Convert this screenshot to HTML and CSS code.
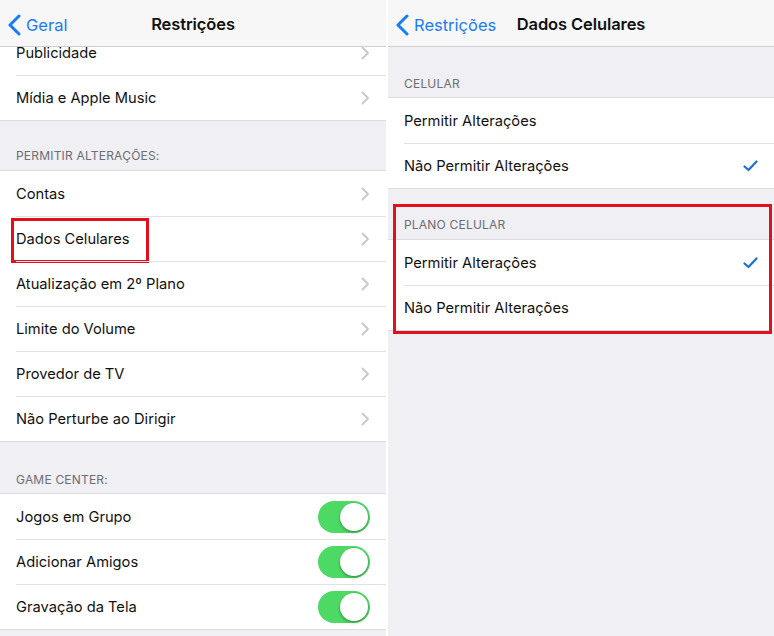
FILE: index.html
```html
<!DOCTYPE html>
<html lang="pt-BR">
<head>
    <meta charset="UTF-8">
    <meta name="viewport" content="width=device-width, initial-scale=1.0">
    <title>Restrições - Dados Celulares</title>
    <link rel="stylesheet" href="styles.css">
</head>
<body>
    <div class="screens">
        <!-- tela da esquerda -->
        <section class="screen restrictions">
            <header class="navbar">
                <a class="back" href="#">
                    <svg width="13" height="22" viewBox="0 0 13 22"><path d="M11 2 L2 11 L11 20" fill="none" stroke="currentColor" stroke-width="3" stroke-linecap="round" stroke-linejoin="round"/></svg>
                    <span>Geral</span>
                </a>
                <h1>Restrições</h1>
            </header>
            <div class="content">
                <ul class="group scrolled">
                    <li class="row"><span>Publicidade</span><i class="chevron"></i></li>
                    <li class="row"><span>Mídia e Apple Music</span><i class="chevron"></i></li>
                </ul>
                <div class="section-title">PERMITIR ALTERAÇÕES:</div>
                <ul class="group">
                    <li class="row"><span>Contas</span><i class="chevron"></i></li>
                    <li class="row marked"><span>Dados Celulares</span><i class="chevron"></i><b class="mark-box"></b></li>
                    <li class="row"><span>Atualização em 2º Plano</span><i class="chevron"></i></li>
                    <li class="row"><span>Limite do Volume</span><i class="chevron"></i></li>
                    <li class="row"><span>Provedor de TV</span><i class="chevron"></i></li>
                    <li class="row"><span>Não Perturbe ao Dirigir</span><i class="chevron"></i></li>
                </ul>
                <div class="section-title tall">GAME CENTER:</div>
                <ul class="group">
                    <li class="row"><span>Jogos em Grupo</span><i class="toggle on"></i></li>
                    <li class="row"><span>Adicionar Amigos</span><i class="toggle on"></i></li>
                    <li class="row"><span>Gravação da Tela</span><i class="toggle on"></i></li>
                </ul>
            </div>
        </section>

        <!-- tela da direita -->
        <section class="screen">
            <header class="navbar">
                <a class="back" href="#">
                    <svg width="13" height="22" viewBox="0 0 13 22"><path d="M11 2 L2 11 L11 20" fill="none" stroke="currentColor" stroke-width="3" stroke-linecap="round" stroke-linejoin="round"/></svg>
                    <span>Restrições</span>
                </a>
                <h1>Dados Celulares</h1>
            </header>
            <div class="content">
                <div class="section-title first">CELULAR</div>
                <ul class="group">
                    <li class="row"><span>Permitir Alterações</span></li>
                    <li class="row"><span>Não Permitir Alterações</span><i class="check"></i></li>
                </ul>
                <div class="marked-section">
                    <div class="section-title">PLANO CELULAR</div>
                    <ul class="group">
                        <li class="row"><span>Permitir Alterações</span><i class="check"></i></li>
                        <li class="row"><span>Não Permitir Alterações</span></li>
                    </ul>
                    <b class="mark-box"></b>
                </div>
            </div>
        </section>
    </div>

    <script>
        // desenha os checks azuis e as setinhas
        document.querySelectorAll(".check").forEach(function (el) {
            el.innerHTML = '<svg width="15" height="12" viewBox="0 0 15 12"><path d="M1.5 6.5 L5.5 10 L13.5 1.5" fill="none" stroke="currentColor" stroke-width="2.2" stroke-linecap="round" stroke-linejoin="round"/></svg>';
        });
        document.querySelectorAll(".chevron").forEach(function (el) {
            el.innerHTML = '<svg width="9" height="14" viewBox="0 0 9 14"><path d="M1.5 1.5 L7 7 L1.5 12.5" fill="none" stroke="currentColor" stroke-width="1.8" stroke-linecap="round" stroke-linejoin="round"/></svg>';
        });
    </script>
</body>
</html>
```

FILE: styles.css
```css
* {
    box-sizing: border-box;
}

body {
    margin: 0;
    background: #ffffff;
    font-family: Inter, 'Liberation Sans', Arial, sans-serif;
    color: #111;
}

.screens {
    display: flex;
    gap: 2px;
    width: 774px;
    height: 636px;
    overflow: hidden;
}

.screen {
    flex: 1;
    display: flex;
    flex-direction: column;
    background: #efeff4;
    overflow: hidden;
}

.navbar {
    position: relative;
    height: 47px;
    flex-shrink: 0;
    display: flex;
    align-items: center;
    padding-top: 2px;
    background: #f7f7f7;
    border-bottom: 1px solid #cfcfd3;
    z-index: 2;
}

.navbar h1 {
    flex: 1;
    margin: 0;
    text-align: center;
    font-size: 16.5px;
    font-weight: 600;
    letter-spacing: -0.1px;
}

.back {
    position: absolute;
    left: 8px;
    top: 14px;
    display: flex;
    align-items: center;
    gap: 5px;
    color: #1b7cf2;
    text-decoration: none;
    font-size: 16.5px;
}

.content {
    flex: 1;
}

.group {
    list-style: none;
    margin: 0;
    padding: 0;
    background: #fff;
    border-top: 1px solid #dcdce0;
    border-bottom: 1px solid #dcdce0;
}

.group.scrolled {
    margin-top: -17px;
    border-top: none;
}

.row {
    position: relative;
    height: 45px;
    display: flex;
    align-items: center;
    justify-content: space-between;
    padding: 0 16px;
    font-size: 14.7px;
}

.row + .row::before {
    content: '';
    position: absolute;
    left: 16px;
    right: 0;
    top: 0;
    border-top: 1px solid #e1e1e4;
}

.section-title {
    height: 50px;
    display: flex;
    align-items: flex-end;
    padding: 0 16px 7px;
    font-size: 12px;
    color: #6d6d72;
    letter-spacing: 0.2px;
}

.restrictions .section-title {
    height: 49px;
}

.restrictions .section-title.tall {
    height: 51px;
    padding-bottom: 6px;
}

.section-title.first {
    padding-bottom: 6px;
}

.chevron {
    display: flex;
    color: #c7c7cc;
}

.check {
    display: flex;
    color: #1d6fd6;
}

.toggle {
    position: relative;
    width: 52px;
    height: 32px;
    border-radius: 16px;
    background: #4cd964;
}

.toggle::after {
    content: '';
    position: absolute;
    right: 2px;
    top: 2px;
    width: 28px;
    height: 28px;
    border-radius: 50%;
    background: #fff;
    box-shadow: 0 2px 3px rgba(0, 0, 0, 0.25), 0 0 0 0.5px rgba(0, 0, 0, 0.1);
}

/* caixas vermelhas de destaque */
.marked-section {
    position: relative;
}

.mark-box {
    position: absolute;
    border: 3px solid #e3101c;
    pointer-events: none;
}

.row .mark-box {
    left: 11px;
    top: 2px;
    width: 138px;
    height: 45px;
}

.marked-section .mark-box {
    left: 5px;
    right: 2px;
    top: 15px;
    bottom: -3px;
}
```
